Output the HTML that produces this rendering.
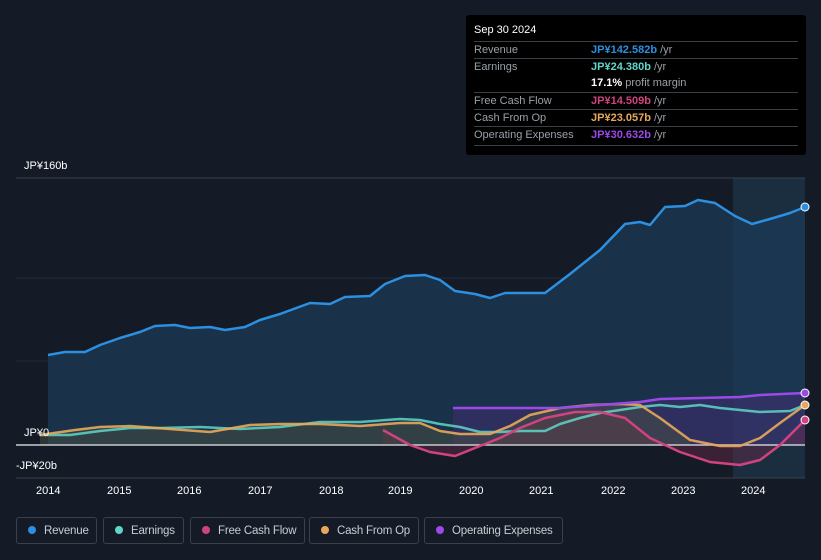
<!DOCTYPE html><html><head><style>
html,body{margin:0;width:821px;height:560px;overflow:hidden}
body{background:#151b26;font-family:"Liberation Sans",sans-serif;position:relative}
.tt{position:absolute;left:466px;top:15px;width:340px;height:140px;background:#000;border-radius:3px;font-size:11px;color:#9aa0a8}
.tt .r{position:absolute;left:8px;right:8px;border-top:1px solid #3a3f47;height:17px;line-height:17px}
.tt b{font-weight:bold}
.lg{position:absolute;top:517px;height:27px;border:1px solid #3b414b;border-radius:3px;color:#c8ccd2;font-size:11.5px;letter-spacing:-0.2px;line-height:26px;box-sizing:border-box;white-space:nowrap;overflow:hidden}
.lg i{display:inline-block;width:8px;height:8px;border-radius:50%;margin:0 8px 0 11px}
.ax{position:absolute;color:#fff;font-size:11px}
</style></head><body>
<svg width="821" height="560" style="position:absolute;left:0;top:0">
<rect x="733" y="178" width="72" height="300" fill="#1a2e40"/>
<line x1="16" y1="178" x2="805" y2="178" stroke="#3a404a"/>
<line x1="16" y1="478" x2="805" y2="478" stroke="#3a404a"/>
<line x1="16" y1="278" x2="805" y2="278" stroke="#222a36"/>
<line x1="16" y1="361" x2="805" y2="361" stroke="#222a36"/>
<path d="M48,355 65,352 85,352 100,345 120,338 140,332 155,326 175,325 190,328 210,327 225,330 245,327 260,320 280,314 310,303 330,304 345,297 370,296 385,284 405,276 425,275 440,280 455,291 475,294 490,298 505,293 530,293 545,293 570,274 600,250 625,224 640,222 650,225 665,207 685,206 698,200 715,203 735,216 752,224 770,219 790,213 805,207 L805,445 48,445Z" fill="#1b3a55" opacity=".75"/>
<path d="M453,408 480,408 520,408 560,408 600,405 640,402 660,399 700,398 740,397 760,395 805,393 L805,445 453,445Z" fill="#4a2f7a" opacity=".45"/>
<path d="M383,430 410,445 430,452 455,456 480,446 500,438 520,428 545,418 575,412 600,412 625,418 650,438 680,452 710,462 740,465 760,460 780,445 805,420 L805,445 383,445Z" fill="#6a2a4a" opacity=".45"/>
<path d="M40,435 75,430 100,427 130,426 170,429 210,432 250,425 280,424 320,424 360,426 400,423 420,423 440,431 460,434 490,434 510,426 530,415 560,408 590,405 620,404 640,405 660,418 690,440 L690,445 40,445Z" fill="#4a5040" opacity=".5"/>
<line x1="16" y1="445" x2="805" y2="445" stroke="#c8ccd0" stroke-width="1.5"/>
<g fill="none" stroke-width="2.5" stroke-linejoin="round">
<path d="M48,355 65,352 85,352 100,345 120,338 140,332 155,326 175,325 190,328 210,327 225,330 245,327 260,320 280,314 310,303 330,304 345,297 370,296 385,284 405,276 425,275 440,280 455,291 475,294 490,298 505,293 530,293 545,293 570,274 600,250 625,224 640,222 650,225 665,207 685,206 698,200 715,203 735,216 752,224 770,219 790,213 805,207" stroke="#2d8fe0"/>
<path d="M40,435 55,435 70,435 100,431 130,428 160,428 200,427 240,429 280,427 320,422 360,422 400,419 420,420 440,424 460,427 480,432 500,432 520,431 545,431 560,424 580,418 600,413 620,410 640,407 660,405 680,407 700,405 720,408 740,410 760,412 790,411 805,405" stroke="#5fd6c8" opacity=".85"/>
<path d="M40,435 75,430 100,427 130,426 170,429 210,432 250,425 280,424 320,424 360,426 400,423 420,423 440,431 460,434 490,434 510,426 530,415 560,408 590,405 620,404 640,405 660,418 690,440 720,446 740,446 760,438 780,423 805,405" stroke="#e8a85a" opacity=".9"/>
<path d="M383,430 410,445 430,452 455,456 480,446 500,438 520,428 545,418 575,412 600,412 625,418 650,438 680,452 710,462 740,465 760,460 780,445 805,420" stroke="#d0437f"/>
<path d="M453,408 480,408 520,408 560,408 600,405 640,402 660,399 700,398 740,397 760,395 805,393" stroke="#9b4ae8"/>
</g>
<g stroke="#fff" stroke-width="1"><circle cx="805" cy="207" r="4" fill="#2d8fe0"/><circle cx="805" cy="393" r="4" fill="#9b4ae8"/><circle cx="805" cy="405" r="4" fill="#e8a85a"/><circle cx="805" cy="420" r="4" fill="#d0437f"/></g>
</svg>
<div class="ax" style="left:24px;top:160px">JP¥160b</div>
<div class="ax" style="left:24px;top:427px">JP¥0</div>
<div class="ax" style="left:16px;top:460px">-JP¥20b</div>
<div class="ax" style="left:36px;top:485px">2014</div><div class="ax" style="left:107px;top:485px">2015</div><div class="ax" style="left:177px;top:485px">2016</div><div class="ax" style="left:248px;top:485px">2017</div><div class="ax" style="left:319px;top:485px">2018</div><div class="ax" style="left:388px;top:485px">2019</div><div class="ax" style="left:459px;top:485px">2020</div><div class="ax" style="left:529px;top:485px">2021</div><div class="ax" style="left:601px;top:485px">2022</div><div class="ax" style="left:671px;top:485px">2023</div><div class="ax" style="left:741px;top:485px">2024</div>
<div class="tt">
<div style="position:absolute;left:8px;top:9px;color:#fff">Sep 30 2024</div>
<div class="r" style="top:26px">Revenue<span style="position:absolute;left:117px"><b style="color:#2d8fe0">JP¥142.582b</b> /yr</span></div>
<div class="r" style="top:43px">Earnings<span style="position:absolute;left:117px"><b style="color:#5fd6c8">JP¥24.380b</b> /yr</span></div>
<div class="r" style="top:60px;border:0"><span style="position:absolute;left:117px"><b style="color:#fff">17.1%</b> profit margin</span></div>
<div class="r" style="top:77px">Free Cash Flow<span style="position:absolute;left:117px"><b style="color:#d0437f">JP¥14.509b</b> /yr</span></div>
<div class="r" style="top:94px">Cash From Op<span style="position:absolute;left:117px"><b style="color:#e8a85a">JP¥23.057b</b> /yr</span></div>
<div class="r" style="top:111px">Operating Expenses<span style="position:absolute;left:117px"><b style="color:#9b4ae8">JP¥30.632b</b> /yr</span></div>
<div class="r" style="top:130px"></div>
</div>
<div class="lg" style="left:16px;width:81px"><i style="background:#2d8fe0"></i>Revenue</div>
<div class="lg" style="left:103px;width:81px"><i style="background:#5fd6c8"></i>Earnings</div>
<div class="lg" style="left:190px;width:115px"><i style="background:#d0437f"></i>Free Cash Flow</div>
<div class="lg" style="left:309px;width:110px"><i style="background:#e8a85a"></i>Cash From Op</div>
<div class="lg" style="left:424px;width:139px"><i style="background:#9b4ae8"></i>Operating Expenses</div>
</body></html>
